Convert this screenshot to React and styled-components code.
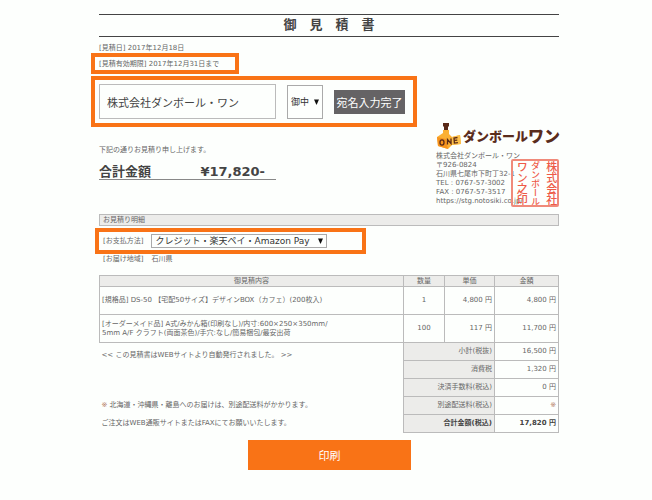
import React from "react";
import styled, { createGlobalStyle } from "styled-components";

const Global = createGlobalStyle`
  *, *::before, *::after { box-sizing: border-box; }
  body {
    margin: 0;
    background: #fdfffd;
    color: #666;
    font: 7px/10px "DejaVu Sans", "Noto Sans CJK JP", sans-serif;
  }
  input, select, button { font-family: inherit; margin: 0; border-radius: 0; }
`;

const Page = styled.main`
  padding: 14px 93px 30px 99px;
`;

const Title = styled.h1`
  margin: 0 0 6px;
  height: 23px;
  border-top: 1px solid #444;
  border-bottom: 1px solid #444;
  color: #444;
  font-size: 13px;
  line-height: 20px;
  text-align: center;
`;

const Line = styled.p`
  margin: 0;
`;

const Highlight = styled.div`
  display: flex;
  align-items: center;
  width: fit-content;
  border: 4px solid #f97316;
`;

const ExpiryBox = styled(Highlight)`
  margin: 0 0 2px -8px;
  height: 21px;
  padding: 0 16px 0 4px;
`;

const AddresseeBox = styled(Highlight)`
  margin-left: -8px;
  height: 51px;
  padding: 0 8px 0 4px;
  gap: 11px;
`;

const NameInput = styled.input`
  width: 177px;
  height: 35px;
  padding: 0 7px;
  border: 1px solid #bbb;
  background: #fdfffd;
  color: #444;
  font-size: 11px;
`;

const SelectWrap = styled.span`
  position: relative;
  display: inline-flex;
`;

const Select = styled.select`
  appearance: none;
  width: ${(p) => p.$width};
  height: ${(p) => p.$height};
  padding: 0 3px;
  border: 1px solid #aaa;
  background: #fdfffd;
  color: #333;
  font-size: 9px;
`;

const Arrow = styled.svg`
  position: absolute;
  right: 4px;
  top: calc(50% - 3px);
  width: 5px;
  height: 6px;
  pointer-events: none;
`;

const DoneButton = styled.button`
  width: 71px;
  height: 24px;
  padding: 0;
  border: 0;
  background: #656365;
  color: #fff;
  font-size: 11px;
`;

const Summary = styled.div`
  display: flex;
  justify-content: space-between;
  align-items: flex-start;
  height: 87px;
`;

const Amounts = styled.div`
  padding-top: 18px;
`;

const Total = styled.p`
  display: flex;
  justify-content: space-between;
  width: 177px;
  margin: 10px 0 0;
  padding-right: 11px;
  border-bottom: 1px solid #888;
  color: #444;
  font-size: 13px;
  font-weight: 700;
  line-height: 14px;
`;

const Company = styled.address`
  position: relative;
  width: 123px;
  margin-top: -6px;
  font-style: normal;
  line-height: 9px;
  white-space: nowrap;
`;

const Logo = styled.div`
  display: flex;
  align-items: center;
  height: 31px;
  padding-bottom: 2px;
  color: #5a2c1c;
  font-weight: 900;
  svg { width: 26px; height: 28px; margin-right: 1px; flex: none; }
`;

const LogoText = styled.span`
  padding-top: 3px;
  font-size: ${(p) => p.$size};
  line-height: 24px;
`;

const Seal = styled.div`
  position: absolute;
  right: 0;
  bottom: -1px;
  display: flex;
  flex-direction: row-reverse;
  justify-content: space-around;
  width: 48px;
  height: 48px;
  border: 2px solid #f08a7a;
  border-radius: 2px;
  color: #ee5b48;
  font-weight: 500;
`;

const SealColumn = styled.span`
  writing-mode: vertical-rl;
  text-align: center;
  font-size: ${(p) => p.$size};
  line-height: 14px;
`;

const SectionTitle = styled.h2`
  margin: 0 0 2px;
  height: 12px;
  padding: 0 3px;
  border: 1px solid #bbb;
  background: #ececea;
  font-size: 7px;
  font-weight: 400;
  line-height: 10px;
`;

const PaymentBox = styled(Highlight)`
  margin-left: -4px;
  height: 26px;
  padding: 0 35px 0 4px;
  gap: 8px;
`;

const Region = styled.p`
  display: flex;
  gap: 8px;
  margin: 0 0 11px;
  padding-left: 4px;
`;

const Table = styled.table`
  width: 100%;
  border-collapse: collapse;
  table-layout: fixed;
  line-height: 9px;
`;

const Col = styled.col`
  width: ${(p) => p.$width};
`;

const Row = styled.tr`
  height: ${(p) => p.$height};
`;

const cell = `
  padding: 0 2px;
  border: 1px solid #bbb;
`;

const Head = styled.th`
  ${cell}
  background: #ececea;
  font-weight: ${(p) => (p.$bold ? 700 : 400)};
  color: ${(p) => (p.$bold ? "#444" : "inherit")};
  text-align: ${(p) => p.$align || "center"};
`;

const Cell = styled.td`
  ${cell}
  font-weight: ${(p) => (p.$bold ? 700 : 400)};
  color: ${(p) => (p.$bold ? "#444" : "inherit")};
  text-align: ${(p) => p.$align || "left"};
`;

const Note = styled.td`
  padding: ${(p) => (p.$top ? "8px 2px 0" : "0 2px")};
  vertical-align: ${(p) => (p.$top ? "top" : "middle")};
`;

const Mark = styled.span`
  color: #b0765c;
`;

const PrintButton = styled.button`
  display: block;
  width: 163px;
  height: 30px;
  margin: 7px auto 0 149px;
  border: 0;
  background: #f97316;
  color: #fff;
  font-size: 11px;
`;

function Down() {
  return (
    <Arrow viewBox="0 0 6 6" preserveAspectRatio="none" aria-hidden="true">
      <path d="M0 0.5h6L3 6z" fill="#111" />
    </Arrow>
  );
}

const items = [
  { name: ["[規格品] DS-50 【宅配50サイズ】デザインBOX（カフェ）(200枚入)"], qty: "1", unit: "4,800 円", sum: "4,800 円" },
  {
    name: ["[オーダーメイド品] A式/みかん箱(印刷なし)/内寸:600×250×350mm/", "5mm A/F クラフト(両面茶色)/手穴:なし/簡易梱包/最安出荷"],
    qty: "100",
    unit: "117 円",
    sum: "11,700 円",
  },
];

export default function App() {
  return (
    <Page>
      <Global />
      <Title>御　見　積　書</Title>
      <Line>[見積日] 2017年12月18日</Line>
      <ExpiryBox>[見積有効期限] 2017年12月31日まで</ExpiryBox>
      <AddresseeBox>
        <NameInput aria-label="宛名" defaultValue="株式会社ダンボール・ワン" />
        <SelectWrap>
          <Select aria-label="敬称" $width="36px" $height="34px">
            <option>御中</option>
            <option>様</option>
          </Select>
          <Down />
        </SelectWrap>
        <DoneButton type="button">宛名入力完了</DoneButton>
      </AddresseeBox>

      <Summary>
        <Amounts>
          <Line>下記の通りお見積り申し上げます。</Line>
          <Total>
            <span>合計金額</span>
            <span>¥17,820-</span>
          </Total>
        </Amounts>
        <Company>
          <Logo>
            <svg viewBox="0 0 26 28" aria-hidden="true">
              <path d="M7 8h6v4l3 3 8-2 1 9-9 1-4 4-10-3-1-9 6-4z" fill="#fbb034" />
              <path d="M1 15l9 2 2 10-10-3z" fill="#f7941e" />
              <path d="M16 15l8-2 1 9-9 1z" fill="#fdc04a" />
              <path d="M7 1h6v3l-1 1v3H8V5L7 4z" fill="#5a2a18" />
              <g fill="none" stroke="#5a2a18" strokeWidth="1.3">
                <ellipse cx="6" cy="20.500" rx="2" ry="2.600" />
                <path d="M11.500 22.500v-5l3.500 4v-5M21.500 15.500l-3.500.6.4 5 3.500-.4M18.300 18.400l3-.3" />
              </g>
            </svg>
            <LogoText $size="13px">ダンボール</LogoText>
            <LogoText $size="16px">ワン</LogoText>
          </Logo>
          <Line>株式会社ダンボール・ワン</Line>
          <Line>〒926-0824</Line>
          <Line>石川県七尾市下町丁32-1</Line>
          <Line>TEL : 0767-57-3002</Line>
          <Line>FAX : 0767-57-3517</Line>
          <Line>https://stg.notosiki.co.jp/</Line>
          <Seal>
            <SealColumn $size="11px">株式会社</SealColumn>
            <SealColumn $size="9px">ダンボール</SealColumn>
            <SealColumn $size="11px">ワン之印</SealColumn>
          </Seal>
        </Company>
      </Summary>

      <SectionTitle>お見積り明細</SectionTitle>
      <PaymentBox>
        <label htmlFor="payment">[お支払方法]</label>
        <SelectWrap>
          <Select id="payment" $width="176px" $height="14px">
            <option>クレジット・楽天ペイ・Amazon Pay</option>
          </Select>
          <Down />
        </SelectWrap>
      </PaymentBox>
      <Region>
        <span>[お届け地域]</span>
        <span>石川県</span>
      </Region>

      <Table>
        <colgroup>
          <Col />
          <Col $width="41px" />
          <Col $width="50px" />
          <Col $width="64px" />
        </colgroup>
        <thead>
          <Row $height="11px">
            <Head>御見積内容</Head>
            <Head>数量</Head>
            <Head>単価</Head>
            <Head>金額</Head>
          </Row>
        </thead>
        <tbody>
          {items.map((it) => (
            <Row key={it.qty} $height="28px">
              <Cell>
                {it.name.map((n) => (
                  <Line key={n}>{n}</Line>
                ))}
              </Cell>
              <Cell $align="center">{it.qty}</Cell>
              <Cell $align="right">{it.unit}</Cell>
              <Cell $align="right">{it.sum}</Cell>
            </Row>
          ))}
        </tbody>
        <tfoot>
          <Row $height="18px">
            <Note $top rowSpan={3}>&lt;&lt; この見積書はWEBサイトより自動発行されました。 &gt;&gt;</Note>
            <Head $align="right" colSpan={2}>小計(税抜)</Head>
            <Cell $align="right">16,500 円</Cell>
          </Row>
          <Row $height="18px">
            <Head $align="right" colSpan={2}>消費税</Head>
            <Cell $align="right">1,320 円</Cell>
          </Row>
          <Row $height="18px">
            <Head $align="right" colSpan={2}>決済手数料(税込)</Head>
            <Cell $align="right">0 円</Cell>
          </Row>
          <Row $height="18px">
            <Note><Mark>※</Mark> 北海道・沖縄県・離島へのお届けは、別途配送料がかかります。</Note>
            <Head $align="right" colSpan={2}>別途配送料(税込)</Head>
            <Cell $align="right"><Mark>※</Mark></Cell>
          </Row>
          <Row $height="18px">
            <Note>ご注文はWEB通販サイトまたはFAXにてお願いいたします。</Note>
            <Head $bold $align="right" colSpan={2}>合計金額(税込)</Head>
            <Cell $bold $align="right">17,820 円</Cell>
          </Row>
        </tfoot>
      </Table>
      <PrintButton type="button">印刷</PrintButton>
    </Page>
  );
}
